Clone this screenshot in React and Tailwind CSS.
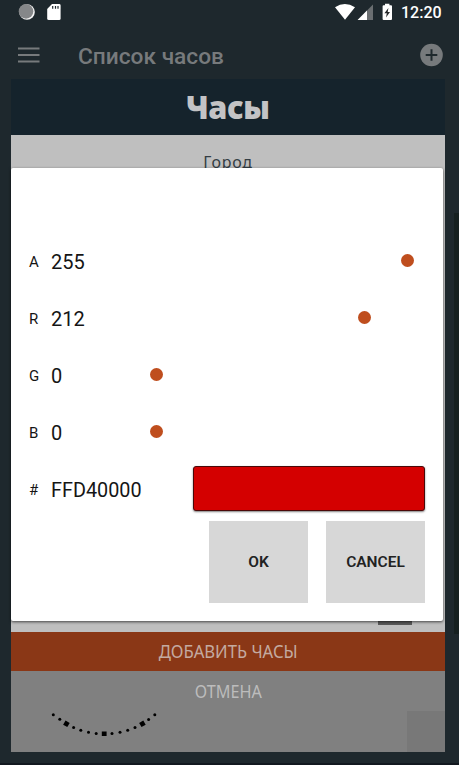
import React from "react";

const channels = [
  { label: "A", value: 255 },
  { label: "R", value: 212 },
  { label: "G", value: 0 },
  { label: "B", value: 0 },
];

const ticks = [
  [53.3, 714.7], [59.8, 719.2], [73.6, 727.5], [80.8, 730.2], [88.5, 732.3],
  [96.2, 733.5], [112, 733.5], [120, 732.3], [127.7, 730.2], [135, 727.5],
  [148.6, 719.4], [154.8, 714.7],
];

function StatusBar() {
  return (
    <div className="flex h-[25px] items-center justify-between">
      <svg className="h-[25px] w-[70px]" viewBox="0 0 70 25">
        <circle cx="27" cy="12" r="7.8" fill="#f4f4f4" />
        <circle cx="26" cy="11.4" r="7.3" fill="#858789" />
        <path d="M52 4h7.2q1.4 0 1.4 1.4v13q0 1.6-1.4 1.6H48.8q-1.6 0-1.6-1.6V9z" fill="#fff" />
        <path d="M52.7 6v2.8M55.5 6v2.8M58 6v2.8" stroke="#1f292f" strokeWidth="1.2" />
      </svg>
      <div className="flex items-center">
        <svg className="h-[25px] w-[66px]" viewBox="335 0 66 25">
          <path d="M335 7.2Q344.8 0.6 355 7.2L345 19.8z" fill="#fff" />
          <path d="M373 4.6V20H357.6z" fill="#6a6e71" />
          <path d="M367 10.6V20h-9.4z" fill="#fff" />
          <path d="M385 3.8h4.4v1.5h1.6q1 0 1 1V19q0 1-1 1h-7.4q-1 0-1-1V6.3q0-1 1-1h1.4z" fill="#fff" />
          <path d="M388.4 8l-4 5.3h2.4L386 17.6l4-5.6h-2.3z" fill="#27292b" />
        </svg>
        <span className="w-[58px] pt-px text-[16px] font-medium leading-[24px] text-white">12:20</span>
      </div>
    </div>
  );
}

function Toolbar() {
  return (
    <div className="flex h-[54px] items-center pl-[18px] pr-4">
      <svg className="mt-[5px] h-[18px] w-[22px]" viewBox="0 0 22 18">
        <path d="M0 2.5h21.5M0 9h21.5M0 15.5h21.5" stroke="#777a7c" strokeWidth="1.9" />
      </svg>
      <h1 className="ml-[38px] mt-[9px] flex-1 text-[22.7px] font-medium leading-[30px] text-[#777a7c]">
        Список часов
      </h1>
      <svg className="mt-[5px] h-[24px] w-[24px]" viewBox="0 0 24 24">
        <circle cx="12.5" cy="12" r="11.3" fill="#777a7c" />
        <path d="M12.5 6.2v11.6M6.7 12h11.6" stroke="#1f292d" strokeWidth="2" />
      </svg>
    </div>
  );
}

function ChannelRow({ label, value }) {
  return (
    <div className="flex h-[57px] items-center">
      <span className="w-[22px] pt-[2px] text-[15px]">{label}</span>
      <span className="w-[99px] text-[20px]">{value}</span>
      <div className="h-[13px] w-[251px]">
        <div
          className="mt-[-1px] h-[13px] w-[13px] rounded-full bg-[#bf4e1e]"
          style={{ marginLeft: `${(value / 255) * 251 - 0.5}px` }}
        />
      </div>
    </div>
  );
}

function ColorDialog() {
  return (
    <div className="absolute left-[11px] top-[168px] flex h-[453px] w-[432px] flex-col rounded-[2px] bg-white pl-[18px] pr-[18px] pt-[65px] text-[#151515] shadow-[0_1px_3px_rgba(0,0,0,0.65)]">
      {channels.map((c) => (
        <ChannelRow key={c.label} label={c.label} value={c.value} />
      ))}
      <div className="flex h-[57px] items-center">
        <span className="w-[22px] pt-[2px] text-[15px]">#</span>
        <span className="w-[142px] text-[20px]">
          <span className="inline-block origin-left scale-x-[0.99]">FFD40000</span>
        </span>
        <div className="mt-[-2px] h-[45px] w-[232px] rounded-[3px] border border-[#4a0909] bg-[#d40000] shadow-[0_1px_2px_rgba(0,0,0,0.5)]" />
      </div>
      <div className="mt-[3px] flex justify-end gap-[18px]">
        <button className="h-[82px] w-[99px] bg-[#d7d7d7] pt-[2px] text-[15.5px] font-semibold text-[#222]">OK</button>
        <button className="h-[82px] w-[99px] bg-[#d7d7d7] pt-[2px] text-[15.5px] font-semibold text-[#222]">CANCEL</button>
      </div>
    </div>
  );
}

export default function App() {
  return (
    <div className="relative h-[765px] w-[459px] overflow-hidden bg-[#1e282d] font-[Roboto,sans-serif]">
      <StatusBar />
      <Toolbar />
      <main className="ml-[11px] flex h-[673px] w-[434px] flex-col bg-[#808080] font-['Noto_Sans',sans-serif]">
        <div className="flex h-[56px] shrink-0 items-center justify-center bg-[#15232c]">
          <h2 className="origin-center scale-x-[0.96] text-[32px] font-black leading-[40px] tracking-[-0.5px] text-[#c3c3c5]">Часы</h2>
        </div>
        <div className="flex h-[497px] shrink-0 flex-col items-center justify-between bg-[#bfbfbf]">
          <span className="mt-[17px] text-[16px] leading-[20px] tracking-[0.7px] text-[#333d44]">Город</span>
          <div className="mb-[7px] mr-[33px] h-[12px] w-[34px] self-end bg-[#5b5b5b]" />
        </div>
        <button className="h-[39px] shrink-0 bg-[#8a3716] text-[#c4aaa0]">
          <span className="inline-block origin-center scale-x-[0.925] whitespace-nowrap text-[18px] leading-[39px]">ДОБАВИТЬ ЧАСЫ</span>
        </button>
        <button className="h-[40px] shrink-0 text-[#bcbcbc]">
          <span className="inline-block origin-center scale-x-[0.9] whitespace-nowrap text-[18px] leading-[40px]">ОТМЕНА</span>
        </button>
        <div className="flex flex-1 items-stretch justify-between">
          <svg className="h-[41px] w-[160px]" viewBox="11 711 160 41">
            {ticks.map(([x, y]) => (
              <circle key={x} cx={x} cy={y} r="1.5" fill="#000" />
            ))}
            <rect x="101.800" y="731.500" width="4.800" height="4.500" />
            <rect x="64" y="721.400" width="4.800" height="4.800" transform="rotate(30 66.400 723.800)" />
            <rect x="140" y="721.400" width="4.800" height="4.800" transform="rotate(-30 142.400 723.800)" />
          </svg>
          <div className="w-[38px] bg-[#787878]" />
        </div>
      </main>
      <div className="absolute left-[454px] top-[213px] h-[421px] w-[5px] bg-[#162020]" />
      <ColorDialog />
      <div className="absolute bottom-0 left-0 h-[2px] w-full bg-[#12181f]" />
    </div>
  );
}
